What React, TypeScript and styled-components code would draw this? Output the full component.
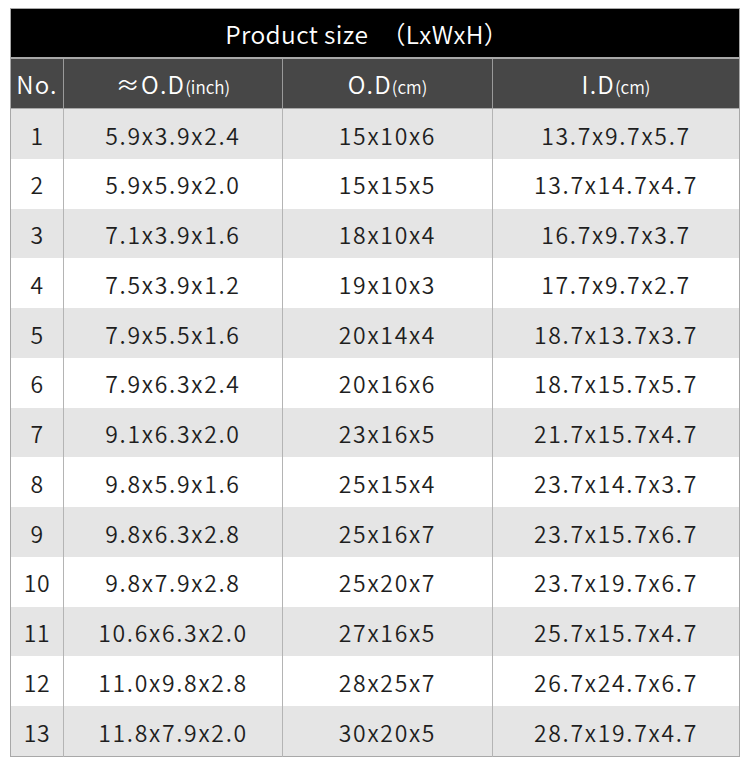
import React from "react";
import styled, { createGlobalStyle } from "styled-components";

const Global = createGlobalStyle`
  html, body { margin: 0; padding: 0; background: #fff; }
  body { font-family: "Noto Sans CJK SC", "Noto Sans", sans-serif; }
`;

const Page = styled.div`
  padding: 8px 0 0 10px;
  width: 750px;
  height: 758px;
  box-sizing: border-box;
  overflow: hidden;
`;

const Table = styled.table`
  border-collapse: collapse;
  table-layout: fixed;
  width: 730px;
  border: 1px solid #a8a8a8;
`;

const TitleCell = styled.th`
  background: #000;
  color: #fff;
  height: 48px;
  padding: 0 16px 0 0;
  font-weight: 350;
  font-size: 24.5px;
  letter-spacing: 0.4px;
  text-align: center;
  border-bottom: 2px solid #a8a8a8;
`;

const HeadCell = styled.th`
  background: #474747;
  color: #fff;
  height: 49px;
  padding: 0;
  font-weight: 350;
  font-size: 24px;
  letter-spacing: 1.2px;
  text-align: center;
  border-left: 1px solid #9a9a9a;
  border-bottom: 1px solid #a8a8a8;
  &:first-child { border-left: none; }
`;

const Small = styled.span`
  font-size: 17px;
  letter-spacing: 0;
`;

const Row = styled.tr<{ $shade: boolean }>`
  background: ${(p) => (p.$shade ? "#e5e5e5" : "#fff")};
`;

const Cell = styled.td`
  height: 48.25px;
  padding: 1.5px 0 0;
  text-align: center;
  font-size: 23px;
  font-weight: 350;
  color: #1e1e1e;
  letter-spacing: 1.7px;
  border-left: 1px solid #b4b4b4;
  &:first-child { border-left: none; letter-spacing: 0.5px; }
`;

const rows: [string, string, string, string][] = [
  ["1", "5.9x3.9x2.4", "15x10x6", "13.7x9.7x5.7"],
  ["2", "5.9x5.9x2.0", "15x15x5", "13.7x14.7x4.7"],
  ["3", "7.1x3.9x1.6", "18x10x4", "16.7x9.7x3.7"],
  ["4", "7.5x3.9x1.2", "19x10x3", "17.7x9.7x2.7"],
  ["5", "7.9x5.5x1.6", "20x14x4", "18.7x13.7x3.7"],
  ["6", "7.9x6.3x2.4", "20x16x6", "18.7x15.7x5.7"],
  ["7", "9.1x6.3x2.0", "23x16x5", "21.7x15.7x4.7"],
  ["8", "9.8x5.9x1.6", "25x15x4", "23.7x14.7x3.7"],
  ["9", "9.8x6.3x2.8", "25x16x7", "23.7x15.7x6.7"],
  ["10", "9.8x7.9x2.8", "25x20x7", "23.7x19.7x6.7"],
  ["11", "10.6x6.3x2.0", "27x16x5", "25.7x15.7x4.7"],
  ["12", "11.0x9.8x2.8", "28x25x7", "26.7x24.7x6.7"],
  ["13", "11.8x7.9x2.0", "30x20x5", "28.7x19.7x4.7"],
];

export default function App() {
  return (
    <Page>
      <Global />
      <Table>
        <colgroup>
          <col style={{ width: 53 }} />
          <col style={{ width: 219 }} />
          <col style={{ width: 210 }} />
          <col />
        </colgroup>
        <thead>
          <tr>
            <TitleCell colSpan={4}>Product size　（LxWxH）</TitleCell>
          </tr>
          <tr>
            <HeadCell>No.</HeadCell>
            <HeadCell>
              ≈O.D<Small>(inch)</Small>
            </HeadCell>
            <HeadCell>
              O.D<Small>(cm)</Small>
            </HeadCell>
            <HeadCell>
              I.D<Small>(cm)</Small>
            </HeadCell>
          </tr>
        </thead>
        <tbody>
          {rows.map((r, i) => (
            <Row key={r[0]} $shade={i % 2 === 0}>
              {r.map((c, j) => (
                <Cell key={j}>{c}</Cell>
              ))}
            </Row>
          ))}
        </tbody>
      </Table>
    </Page>
  );
}
